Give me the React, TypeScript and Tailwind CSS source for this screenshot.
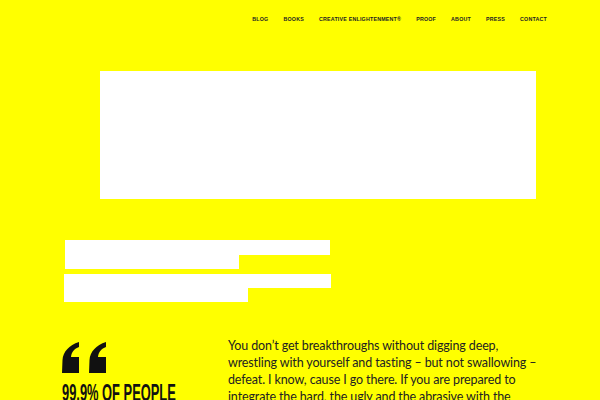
import React from 'react';

const navItems = ['Blog', 'Books', 'Creative Enlightenment®', 'Proof', 'About', 'Press', 'Contact'];

function QuoteMark() {
  return (
    <svg width="45" height="31" viewBox="0 0 45 31" fill="#111">
      <path d="M17 0 C7 3 1 10 0.5 18 L0 31 L17 31 L17 15 L9 15 C9.5 10 12.5 6.5 17 5 Z" />
      <path d="M44 0 C34 3 28 10 27.5 18 L27 31 L44 31 L44 15 L36 15 C36.5 10 39.5 6.5 44 5 Z" />
    </svg>
  );
}

export default function App() {
  return (
    <div className="w-[600px] h-[400px] overflow-hidden bg-[#ffff00] text-[#1a1a1a]" style={{ fontFamily: 'Lato, "Open Sans", sans-serif' }}>
      <nav className="flex justify-end gap-[15px] pr-[53px] pt-[16px] h-[71px]">
        {navItems.map((item) => (
          <a
            key={item}
            href="#"
            className="text-[5.3px] font-bold uppercase tracking-[0.04em] leading-[7px] text-[#222]"
            style={{ fontFamily: '"Liberation Sans", Arial, sans-serif' }}
          >
            {item}
          </a>
        ))}
      </nav>

      <div className="ml-[100px] w-[436px] h-[128px] bg-white" />

      <div className="mt-[41px] ml-[65px] flex flex-col items-start">
        <div className="w-[265px] h-[15px] bg-white" />
        <div className="w-[174px] h-[14px] bg-white" />
      </div>
      <div className="mt-[5px] ml-[64px] flex flex-col items-start">
        <div className="w-[267px] h-[14px] bg-white" />
        <div className="w-[184px] h-[14px] bg-white" />
      </div>

      <section className="flex mt-[35px] pl-[62px]">
        <div className="w-[166px] shrink-0 pt-[5px]">
          <QuoteMark />
          <h3
            className="mt-[9px] text-[23px] font-bold uppercase leading-none text-[#111] whitespace-nowrap origin-left scale-x-[0.56]"
            style={{ fontFamily: '"Liberation Sans", Arial, sans-serif' }}
          >
            99.9% of people
          </h3>
        </div>
        <p className="w-[312px] text-[12.5px] tracking-[-0.01em] leading-[17px] text-[#222]">
          You don’t get breakthroughs without digging deep, wrestling with yourself and tasting – but not swallowing – defeat. I know, cause I go there. If you are prepared to integrate the hard, the ugly and the abrasive with the beatific-sublime, then you’ll <strong>find the insights</strong>.
        </p>
      </section>
    </div>
  );
}
